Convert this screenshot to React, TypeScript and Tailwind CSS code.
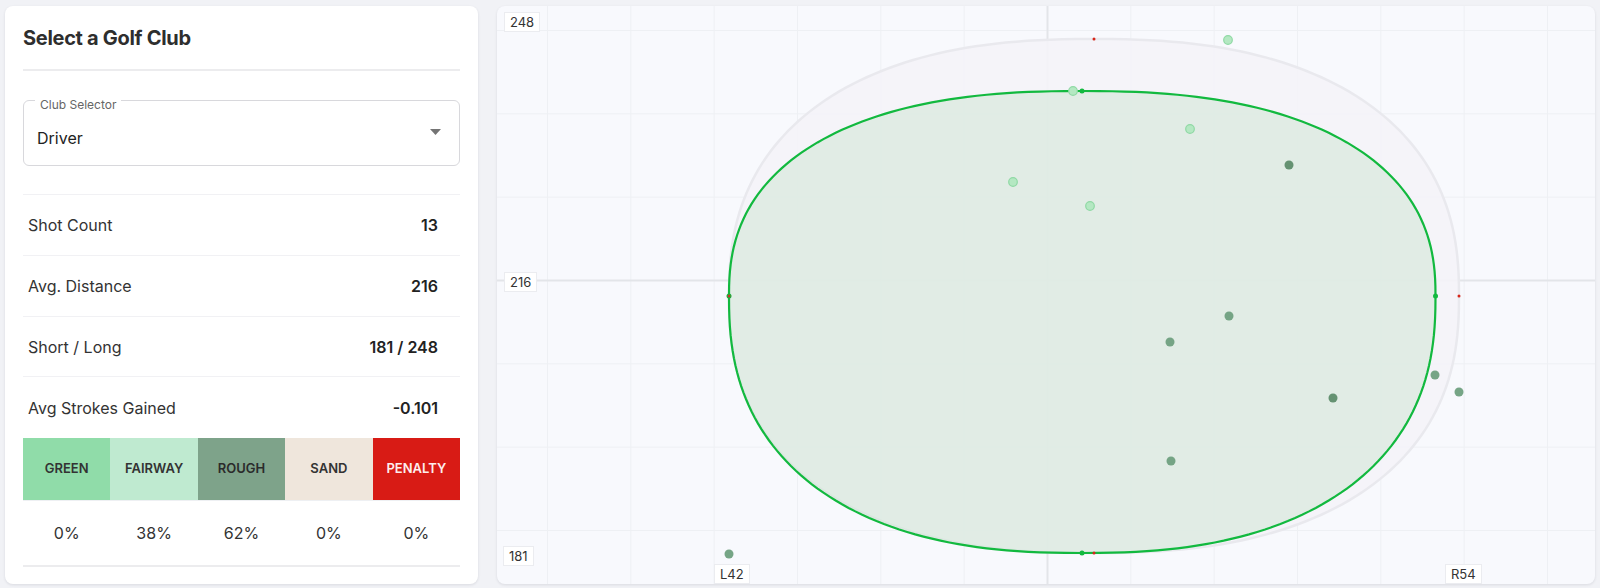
import { useMemo } from 'react'

const STATS = [
  { label: 'Shot Count', value: '13' },
  { label: 'Avg. Distance', value: '216' },
  { label: 'Short / Long', value: '181 / 248' },
  { label: 'Avg Strokes Gained', value: '-0.101' },
]

const LIES = [
  { name: 'GREEN', pct: '0%', cls: 'bg-[#90dca9] text-[#333]' },
  { name: 'FAIRWAY', pct: '38%', cls: 'bg-[#bfead0] text-[#333]' },
  { name: 'ROUGH', pct: '62%', cls: 'bg-[#7ea38a] text-[#2b2b2b]' },
  { name: 'SAND', pct: '0%', cls: 'bg-[#efe6dc] text-[#333]' },
  { name: 'PENALTY', pct: '0%', cls: 'bg-[#d81b15] text-[#fdeeee]' },
]

// chart coords are local to the chart card
const CX = 550.5
const CY = 274.5
const STEP = 83.333

const FAIRWAY_SHOTS = [
  [731, 34],
  [576, 85],
  [693, 123],
  [516, 176],
  [593, 200],
]

const ROUGH_SHOTS: [number, number, boolean][] = [
  [792, 159, true],
  [732, 310, false],
  [673, 336, false],
  [836, 392, true],
  [938, 369, false],
  [962, 386, false],
  [674, 455, false],
  [232, 548, false],
]

function blob(cx: number, cy: number, rxL: number, rxR: number, ryT: number, ryB: number, n: number) {
  const pts: string[] = []
  const steps = 240
  for (let i = 0; i <= steps; i++) {
    const t = (i / steps) * Math.PI * 2
    const c = Math.cos(t)
    const s = Math.sin(t)
    const x = cx + Math.sign(c) * Math.pow(Math.abs(c), 2 / n) * (c >= 0 ? rxR : rxL)
    const y = cy + Math.sign(s) * Math.pow(Math.abs(s), 2 / n) * (s >= 0 ? ryB : ryT)
    pts.push(`${i === 0 ? 'M' : 'L'}${x.toFixed(2)} ${y.toFixed(2)}`)
  }
  return pts.join(' ') + ' Z'
}

function AxisTag({ text, className }: { text: string; className: string }) {
  return (
    <div
      className={`absolute h-[20px] px-[5px] flex items-center bg-white border border-[#ebecf0] text-[13px] text-[#333] leading-none ${className}`}
    >
      {text}
    </div>
  )
}

function DispersionChart() {
  const outer = useMemo(() => blob(597, 290, 365, 365, 257, 257, 2.4), [])
  const inner = useMemo(() => blob(585, 290, 353, 353.5, 205, 257, 2.4), [])

  const vLines = []
  for (let k = -6; k <= 6; k++) vLines.push(CX + k * STEP)
  const hLines = []
  for (let k = -3; k <= 3; k++) hLines.push(CY + k * STEP)

  return (
    <div className="relative flex-1 bg-[#f8f9fd] rounded-lg overflow-hidden shadow-[0_1px_3px_rgba(20,20,40,0.10)]">
      <svg width={1098} height={578} className="block">
        {vLines.map((x) =>
          x === CX ? null : <line key={`v${x}`} x1={x} y1={0} x2={x} y2={578} stroke="#eef0f4" strokeWidth={1} />
        )}
        {hLines.map((y) =>
          y === CY ? null : <line key={`h${y}`} x1={0} y1={y} x2={1098} y2={y} stroke="#eef0f4" strokeWidth={1} />
        )}
        <line x1={CX} y1={0} x2={CX} y2={578} stroke="#e3e5e9" strokeWidth={2} />
        <line x1={0} y1={CY} x2={1098} y2={CY} stroke="#e3e5e9" strokeWidth={2} />

        <path d={outer} fill="#f4f3f8" fillOpacity={0.9} stroke="#e9e9ee" strokeWidth={2.5} />
        <path d={inner} fill="#cfe6d6" fillOpacity={0.55} stroke="#12b93f" strokeWidth={2.2} />

        {FAIRWAY_SHOTS.map(([x, y]) => (
          <circle key={`f${x}`} cx={x} cy={y} r={4.3} fill="#b4e8c2" stroke="#8fd9a4" strokeWidth={1.2} />
        ))}
        {ROUGH_SHOTS.map(([x, y, dark]) => (
          <circle key={`r${x}`} cx={x} cy={y} r={4.5} fill={dark ? '#5e8d6c' : '#6fa07f'} fillOpacity={0.95} />
        ))}

        <circle cx={585} cy={85} r={2.5} fill="#12b93f" />
        <circle cx={938.5} cy={290} r={2.5} fill="#12b93f" />
        <circle cx={585} cy={547} r={2.5} fill="#12b93f" />
        <circle cx={232} cy={290} r={2.5} fill="#12b93f" />

        <circle cx={597} cy={33} r={1.5} fill="#d6261a" />
        <circle cx={962} cy={290} r={1.5} fill="#d6261a" />
        <circle cx={597} cy={547} r={1.5} fill="#d6261a" />
        <circle cx={232} cy={290} r={1.5} fill="#c0392b" />
      </svg>

      <AxisTag text="248" className="left-[7px] top-[6px]" />
      <AxisTag text="216" className="left-[7px] top-[266px]" />
      <AxisTag text="181" className="left-[6px] top-[540px]" />
      <AxisTag text="L42" className="left-[217px] top-[558px]" />
      <AxisTag text="R54" className="left-[948px] top-[558px]" />
    </div>
  )
}

function ClubPanel() {
  return (
    <div className="w-[473px] shrink-0 bg-white rounded-lg shadow-[0_1px_3px_rgba(20,20,40,0.10)] px-[18px] pt-[20px] pb-[17px] flex flex-col">
      <h2 className="text-[20px] leading-[24px] font-bold text-[#2e2e2e] tracking-[-0.3px]">Select a Golf Club</h2>
      <div className="mt-[19px] h-[2px] bg-[#ececee]" />

      <div className="relative mt-[29px] h-[66px] rounded-[6px] border border-[#d8d8dc] flex items-center pt-[10px] pl-[13px] pr-[18px]">
        <span className="absolute left-[11px] -top-[4px] bg-white px-[5px] text-[12px] leading-[16px] text-[#666]">
          Club Selector
        </span>
        <span className="flex-1 text-[16px] text-[#222]">Driver</span>
        <svg width="11" height="6" viewBox="0 0 11 6" className="-translate-y-[6px]">
          <path d="M0 0 L11 0 L5.5 6 Z" fill="#747474" />
        </svg>
      </div>

      <div className="mt-[28px] h-px bg-[#f1f1f4]" />
      {STATS.map((s, i) => (
        <div
          key={s.label}
          className={`h-[61px] flex items-center justify-between pl-[5px] pr-[22px] ${
            i < STATS.length - 1 ? 'border-b border-[#f1f1f4]' : ''
          }`}
        >
          <span className="text-[16px] text-[#333]">{s.label}</span>
          <span className="text-[16px] font-semibold text-[#222]">{s.value}</span>
        </div>
      ))}

      <div className="grid grid-cols-5 h-[62px]">
        {LIES.map((l) => (
          <div key={l.name} className={`flex items-center justify-center text-[13px] font-semibold ${l.cls}`}>
            {l.name}
          </div>
        ))}
      </div>
      <div className="grid grid-cols-5 h-[65px] border-t border-[#eef0f3]">
        {LIES.map((l) => (
          <div key={l.name} className="flex items-center justify-center text-[16px] text-[#333]">
            {l.pct}
          </div>
        ))}
      </div>
      <div className="h-[2px] bg-[#ececee]" />
    </div>
  )
}

export default function App() {
  return (
    <div className="w-[1600px] h-[588px] bg-[#f1f2f6] flex gap-[19px] pl-[5px] pr-[5px] pt-[6px] pb-[4px] font-['Inter',sans-serif]">
      <ClubPanel />
      <DispersionChart />
    </div>
  )
}
